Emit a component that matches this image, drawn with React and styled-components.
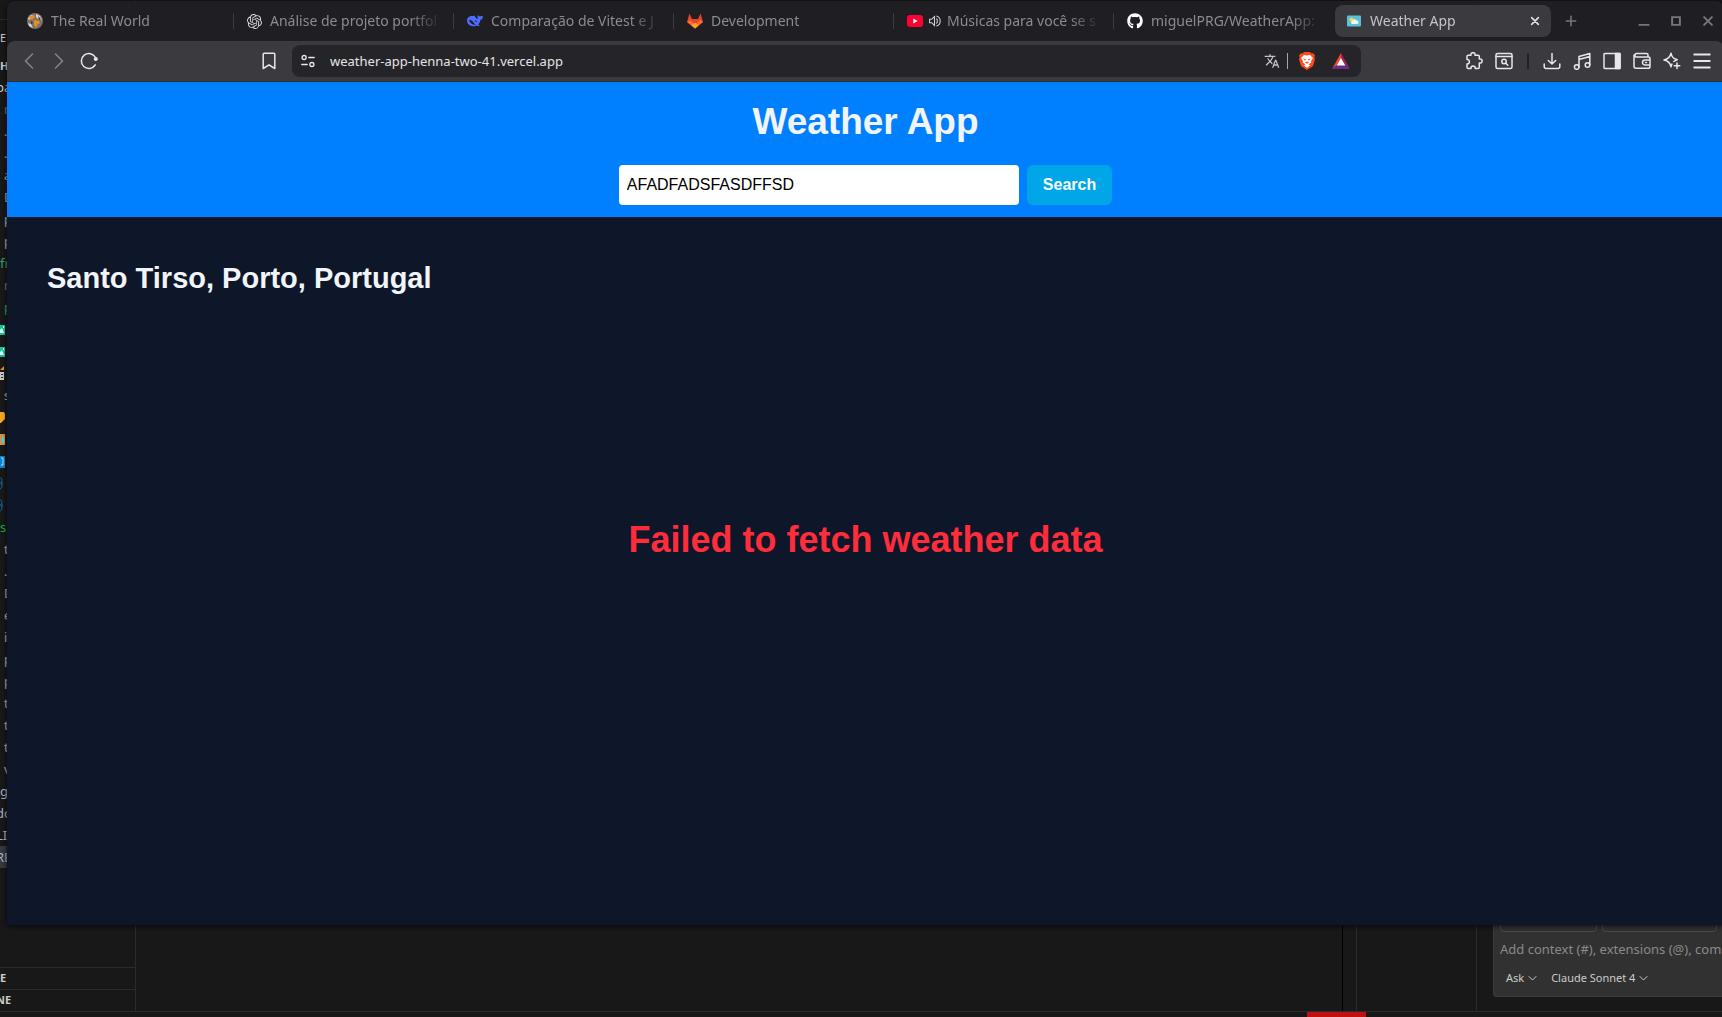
import React, { useState } from "react";
import styled, { createGlobalStyle } from "styled-components";
import { SiOpenai } from "react-icons/si";
import { FaGithub } from "react-icons/fa";
import { MdTranslate } from "react-icons/md";

const uiFont = `"Noto Sans", "Open Sans", sans-serif`;
const pageFont = `"Liberation Sans", Arial, sans-serif`;

const GlobalStyle = createGlobalStyle`
  *, *::before, *::after { box-sizing: border-box; }
  body { margin: 0; background: #181818; overflow: hidden; }
  button, input { font: inherit; }
  button { border: 0; padding: 0; background: none; color: inherit; cursor: pointer; }
  svg { display: block; flex: none; }
  h1, h2, p { margin: 0; }
`;

const Desktop = styled.div`
  position: relative;
  height: 100vh;
  overflow: hidden;
  background: #181818;
  color: #cccccc;
  font-family: ${uiFont};
`;

/* ---------- editor behind the browser ---------- */

const Editor = styled.div`
  display: flex;
  flex-direction: column;
  height: 100%;
`;

const Workbench = styled.div`
  display: flex;
  flex: 1;
  min-height: 0;
`;

const Sidebar = styled.aside`
  display: flex;
  flex-direction: column;
  width: 136px;
  border-right: 1px solid #2b2b2b;
  overflow: hidden;
`;

const SidebarTop = styled.div`
  height: 20px;
  flex: none;
  border-bottom: 1px solid #2b2b2b;
`;

const SidebarTitle = styled.div`
  height: ${(p) => p.$height}px;
  flex: none;
  display: flex;
  align-items: center;
  font-size: 11px;
  font-weight: ${(p) => (p.$bold ? 700 : 400)};
`;

const FileRow = styled.div`
  display: flex;
  align-items: center;
  flex: none;
  height: 22px;
  padding-left: ${(p) => (p.$nested ? 4 : 0)}px;
  text-indent: ${(p) => (p.$clipped ? -4 : 0)}px;
  font-size: 13px;
  color: ${(p) => p.$color || "#a8b4c0"};
  background: ${(p) => (p.$active ? "#37373d" : "transparent")};
`;

const Spacer = styled.div`
  flex: 1;
`;

const Section = styled.div`
  display: flex;
  align-items: center;
  flex: none;
  height: 22px;
  padding-bottom: 2px;
  text-indent: ${(p) => (p.$clipped ? -4 : 0)}px;
  border-top: 1px solid #2b2b2b;
  font-size: 11px;
  font-weight: 700;
`;

const Gutter = styled.div`
  width: ${(p) => p.$width}px;
  border-left: ${(p) => (p.$dark ? "1px solid #000000" : "1px solid #2b2b2b")};
`;

const ChatPanel = styled.section`
  display: flex;
  align-items: flex-end;
  width: 246px;
  padding: 0 0 14px 16px;
  border-left: 1px solid #2b2b2b;
`;

const ChatBox = styled.div`
  flex: 1;
  min-width: 0;
  overflow: hidden;
  padding: 0 0 8px 6px;
  background: #313131;
  border: 1px solid #3c3c3c;
  border-right: 0;
  border-radius: 4px 0 0 4px;
`;

const Chips = styled.div`
  display: flex;
  gap: 5px;
`;

const Chip = styled.div`
  width: ${(p) => p.$width}px;
  height: 22px;
  border: 1px solid #4a4a4a;
  border-radius: 4px;
`;

const ChatInput = styled.input`
  display: block;
  width: 320px;
  height: 34px;
  padding: 0;
  border: 0;
  outline: 0;
  background: none;
  color: #cccccc;
  font-size: 13px;
  &::placeholder { color: #8a8a8a; opacity: 1; }
`;

const ChatActions = styled.div`
  display: flex;
  gap: 14px;
  height: 22px;
  padding-left: 6px;
`;

const ChatAction = styled.button`
  display: flex;
  align-items: center;
  gap: 4px;
  font-size: 11px;
  white-space: nowrap;
`;

const StatusBar = styled.footer`
  flex: none;
  height: 6px;
  border-top: 1px solid #2b2b2b;
`;

const RemoteError = styled.div`
  width: 59px;
  height: 5px;
  margin-left: auto;
  margin-right: 356px;
  background: #c01010;
`;

/* ---------- browser window ---------- */

const Browser = styled.div`
  position: absolute;
  inset: 1px -2px 92px 7px;
  display: flex;
  flex-direction: column;
  background: #1f1e23;
  border-radius: 8px 8px 0 0;
  overflow: hidden;
  box-shadow: 0 1px 5px rgba(0, 0, 0, 0.8);
`;

const TabStrip = styled.div`
  display: flex;
  align-items: center;
  flex: none;
  height: 40px;
  padding-left: 8px;
`;

const Divider = styled.span`
  flex: none;
  width: 1px;
  height: 16px;
  margin: 0 1px 0 2px;
  background: ${(p) => (p.$hidden ? "transparent" : "#3c3b40")};
`;

const Tab = styled.div`
  display: flex;
  align-items: center;
  flex: 0 1 216px;
  min-width: 0;
  gap: 8px;
  height: 32px;
  padding: 0 9px 0 12px;
  border-radius: 8px;
  background: ${(p) => (p.$active ? "#3b3a3f" : "transparent")};
  color: ${(p) => (p.$active ? "#c4c4c6" : "#8c8b8e")};
  font-size: 14px;
`;

const TabTitle = styled.button`
  flex: 1;
  min-width: 0;
  overflow: hidden;
  white-space: nowrap;
  text-align: left;
  line-height: 24px;
  mask-image: linear-gradient(to right, #000 calc(100% - 32px), transparent);
`;

const Sound = styled.span`
  display: flex;
  margin: 0 -2px;
`;

const StripButton = styled.button`
  display: flex;
  align-items: center;
  justify-content: center;
  flex: none;
  width: 32px;
  height: 32px;
  color: #77767a;
`;

const CloseTab = styled.button`
  display: flex;
  align-items: center;
  justify-content: center;
  width: 14px;
  height: 16px;
  color: #e0e0e2;
`;

const Toolbar = styled.div`
  display: flex;
  align-items: center;
  flex: none;
  height: 41px;
  padding: 0 7px;
  background: #3b3a3f;
  border-bottom: 1px solid #2f2e33;
  border-radius: 8px 8px 0 0;
`;

const ToolButton = styled.button`
  display: flex;
  align-items: center;
  justify-content: center;
  flex: none;
  width: 30px;
  height: 30px;
  color: ${(p) => (p.$dim ? "#87868a" : "#e8e8ea")};
`;

const ToolDivider = styled.span`
  flex: none;
  width: 2px;
  height: 16px;
  margin: 0 8px;
  background: #222126;
`;

const LeadTools = styled.div`
  display: flex;
  flex: none;
  width: 270px;
  justify-content: space-between;
`;

const Group = styled.div`
  display: flex;
  align-items: center;
  gap: ${(p) => p.$gap || 0}px;
`;

const AddressBar = styled.div`
  display: flex;
  align-items: center;
  flex: 1;
  min-width: 0;
  height: 32px;
  margin: 0 98px 0 8px;
  padding: 0 5px 0 1px;
  border-radius: 8px;
  background: #252429;
`;

const UrlInput = styled.input`
  flex: 1;
  min-width: 0;
  height: 28px;
  margin-left: 7px;
  padding: 0;
  border: 0;
  outline: 0;
  background: none;
  color: #e4e4e6;
  font-size: 13px;
`;

const UrlDivider = styled.span`
  width: 1px;
  height: 16px;
  margin-right: 4px;
  background: #a8a8aa;
`;

/* ---------- weather page ---------- */

const Page = styled.div`
  display: flex;
  flex-direction: column;
  flex: 1;
  min-height: 0;
  background: #0d1729;
  color: #f1f5f9;
  font-family: ${pageFont};
`;

const PageHeader = styled.header`
  display: flex;
  flex-direction: column;
  align-items: center;
  gap: 16px;
  padding: 12px;
  background: #0080ff;
`;

const PageTitle = styled.h1`
  font-size: 37px;
  line-height: 55px;
`;

const SearchForm = styled.form`
  display: flex;
  gap: 8px;
`;

const SearchInput = styled.input`
  width: 400px;
  height: 40px;
  padding: 0 8px;
  border: 0;
  outline: 0;
  border-radius: 4px;
  background: #ffffff;
  color: #000000;
  font-size: 16px;
`;

const SearchButton = styled.button`
  height: 40px;
  padding: 0 16px;
  border-radius: 6px;
  background: #00a6e8;
  color: #f8fafc;
  font-size: 16px;
  font-weight: 700;
`;

const Content = styled.main`
  display: flex;
  flex-direction: column;
  flex: 1;
  padding: 40px;
`;

const Location = styled.h2`
  font-size: 29px;
  line-height: 42px;
`;

const ErrorMessage = styled.p`
  padding-top: 214px;
  color: #ff2c3c;
  font-size: 36px;
  font-weight: 700;
  line-height: 54px;
  text-align: center;
`;

/* ---------- icons ---------- */

const Line = ({ size = 18, width = 1.5, children, ...rest }) => (
  <svg width={size} height={size} viewBox="0 0 18 18" fill="none" stroke="currentColor"
    strokeWidth={width} strokeLinecap="round" strokeLinejoin="round" aria-hidden="true" {...rest}>
    {children}
  </svg>
);

const GlobeIcon = () => (
  <svg width="16" height="16" viewBox="0 0 16 16" aria-hidden="true">
    <circle cx="8" cy="8" r="8" fill="#77736e" />
    <path d="M1 5 4 2l3 .5L5 5 2 7zM9 1l4 2 2 4-4-1-2-2zM1 10l3 1 2 4-4-2z" fill="#d9d5cd" />
    <path d="M3 3l4-1 1 2-3 3-3-2zM7 7l5 1 1 2-3 2-1 3-2-3z" fill="#f08a1d" />
    <path d="M11 3l3 3-2 1zM4 8l2 2-2 1z" fill="#36332f" />
  </svg>
);

const WhaleIcon = () => (
  <svg width="16" height="14" viewBox="0 0 16 14" aria-hidden="true">
    <path d="M0 6.5C0 3.2 2.6 1.6 5.4 2c1 .1 1.7-.6 2.6-.1-.5.8 1.4 2.5 2.7 3 .1-1.5-.4-2.4.1-3.8.7 1.3 2 1.5 3.1 1.2.8-.2 1.4-.9 2.1-.6-.1 2.3-.9 4-2.7 4.4-.1 2-1 3.5-2 4.4l1.4 1.2c-1.2.6-2.2.3-3-.3C4.6 13.8 0 10.6 0 6.5z" fill="#4d6bfe" />
    <path d="M2 6c2-.6 4.2 1.6 5.3 3.4.5.8 1 1.1 1.6 1.1-2 1-6-1-6.9-4.5zM8 6.400c1-.2 1.900.7 1.900 1.700-.8 0-1.500-.8-1.900-1.700z" fill="#1f1e23" />
  </svg>
);

const GitlabIcon = () => (
  <svg width="16" height="16" viewBox="0 0 16 16" aria-hidden="true">
    <path d="M2.500.5 5 6h6L13.500.5 16 9l-8 6.500L0 9z" fill="#e8432e" />
    <path d="M0 9l3-2 5 4.500L13 7l3 2-8 6.600z" fill="#fc6d26" />
    <path d="M4.500 12.200 8 9.500l3.500 2.700L8 15.600z" fill="#fca326" />
  </svg>
);

const YoutubeIcon = () => (
  <svg width="16" height="12" viewBox="0 0 16 12" aria-hidden="true">
    <rect width="16" height="12" rx="3" fill="#ff0033" />
    <path d="M6.300 3.500v5L10.700 6z" fill="#fff" />
  </svg>
);

const SpeakerIcon = () => (
  <svg width="12" height="12" viewBox="0 0 12 12" fill="none" stroke="#cfcfd1" strokeWidth="1.100" aria-hidden="true">
    <path d="M.6 4.300h2L5.500 1.500v9L2.600 7.700h-2z" />
    <path d="M7.300 3.500c1.500 1 1.500 4 0 5M7.300 1c5.200 1.200 5.200 8.800 0 10" />
  </svg>
);

const WeatherIcon = () => (
  <svg width="15" height="12" viewBox="0 0 15 12" aria-hidden="true">
    <rect y="0.500" width="14" height="11" rx="1" fill="#5cc0da" />
    <circle cx="4.500" cy="4.500" r="2" fill="#f9d54a" />
    <path d="M5 9a1.700 1.700 0 0 1 .4-3.200 2.200 2.200 0 0 1 4.200-.2A1.800 1.800 0 0 1 10.500 9z" fill="#eef8fb" />
  </svg>
);

const BraveIcon = () => (
  <svg width="16" height="18" viewBox="0 0 16 18" aria-hidden="true">
    <path d="M5 0h6l1.500 1.500 1.700-.2L16 3.500l-.6 1.700.6 2-2 6.800L8 18l-6-4L0 7.200l.6-2L0 3.500l1.800-2.200 1.700.2z" fill="#ff4a1c" />
    <path d="M5 3l3 .5L11 3l3 3-2 3 .3 1.500-2.600 1.700L11 13.500 8 15.700 5 13.500l1.300-1.300-2.600-1.700L4 9 2 6z" fill="#fff" />
    <path d="M4 6.500l3 .8-.6 1.500zM12 6.500l-3 .8.6 1.500zM6 10.500l2-1 2 1-2 1.200z" fill="#ff4a1c" />
  </svg>
);

const BatIcon = () => (
  <svg width="18" height="16" viewBox="0 0 18 16" aria-hidden="true">
    <path d="M9 0v5.500L5 12l-5 4z" fill="#ff4724" />
    <path d="M9 0l9 16-5-4-4-6.500z" fill="#9e1f63" />
    <path d="M0 16l5-4h8l5 4z" fill="#662d91" />
    <path d="M9 5l4.300 7.500H4.700z" fill="#fff" />
  </svg>
);

const ChevronDown = () => (
  <Line size={9} width={2}><path d="M2 7l7 7 7-7" /></Line>
);

const FileIcon = ({ kind }) => (
  <svg width="5" height="14" viewBox="0 0 5 14" aria-hidden="true">
    {kind === "image" && <><path d="M0 3h5v10H0z" fill="#0ac79b" /><path d="M0 11V8l2-2 2 5zM3 4h1v2H3z" fill="#e6fff8" /></>}
    {kind === "lint" && <><path d="M0 4l4-4v4z" fill="#e8922a" /><path d="M0 6h4v8H0z" fill="#c8c8c8" /><path d="M1 8h2v1H1zM1 11h2v1H1z" fill="#222" /></>}
    {kind === "folder" && <path d="M0 2h4l1 2v5l-4 4H0z" fill="#f5a623" />}
    {kind === "box" && <><path d="M0 2h5v11H0z" fill="#c9954f" /><path d="M2 5h2v6H2z" fill="#5ed0d5" /></>}
    {kind === "json" && <><path d="M0 2h5v12H0z" fill="#0b85d1" /><path d="M1 4h2v7H1" fill="none" stroke="#b8e5ff" /></>}
    {kind === "react" && <path d="M0 2c3 0 2 5 0 5M0 7c2 0 3 5 0 6M1 6a1.500 1.500 0 1 1 0 3" fill="none" stroke="#1467a8" />}
  </svg>
);

const files = [
  { t: "pa", root: true, clipped: true, color: "#cccccc" },
  { t: "n", color: "#6f7780" }, { t: "." }, { t: "." }, { t: "a" }, { t: "D" }, { t: "p" }, { t: "p" },
  { t: "fr", root: true, color: "#3f9e68" },
  { t: "n", color: "#6f7780" }, { t: "p", color: "#3f9e68" },
  { icon: "image" }, { icon: "image" }, { icon: "lint" }, { t: "s" },
  { icon: "folder" }, { icon: "box" }, { icon: "json" }, { icon: "react" }, { icon: "react" },
  { t: "s", root: true, color: "#12b04c" },
  { t: "t" }, { t: "." }, { t: "D" }, { t: "e" }, { t: "i" }, { t: "p" }, { t: "p" },
  { t: "t" }, { t: "t" }, { t: "t" }, { t: "v" },
  { t: "g", root: true }, { t: "do", root: true, clipped: true }, { t: "LI", root: true, clipped: true },
  { t: "RE", root: true, clipped: true, active: true },
];

const tabs = [
  { title: "The Real World", icon: <GlobeIcon /> },
  { title: "Análise de projeto portfol", icon: <SiOpenai size={15} color="#d8d8da" /> },
  { title: "Comparação de Vitest e J", icon: <WhaleIcon /> },
  { title: "Development", icon: <GitlabIcon /> },
  { title: "Músicas para você se s", icon: <YoutubeIcon />, sound: true },
  { title: "miguelPRG/WeatherApp:", icon: <FaGithub size={16} color="#ffffff" /> },
  { title: "Weather App", icon: <WeatherIcon />, active: true },
];

export default function App() {
  const [city, setCity] = useState("AFADFADSFASDFFSD");
  const [url, setUrl] = useState("weather-app-henna-two-41.vercel.app");

  return (
    <Desktop>
      <GlobalStyle />
      <Editor>
        <Workbench>
          <Sidebar>
            <SidebarTop />
            <SidebarTitle $height={34}>E</SidebarTitle>
            <SidebarTitle $height={22} $bold>H</SidebarTitle>
            {files.map((f, i) => (
              <FileRow key={i} $nested={!f.root && !f.icon} $clipped={f.clipped} $color={f.color} $active={f.active}>
                {f.icon ? <FileIcon kind={f.icon} /> : f.t}
              </FileRow>
            ))}
            <Spacer />
            <Section>E</Section>
            <Section $clipped>NE</Section>
          </Sidebar>
          <Spacer />
          <Gutter $width={14} $dark />
          <Gutter $width={120} />
          <ChatPanel>
            <ChatBox>
              <Chips><Chip $width={97} /><Chip $width={115} /></Chips>
              <ChatInput aria-label="Chat message" placeholder="Add context (#), extensions (@), commands" />
              <ChatActions>
                <ChatAction type="button">Ask <ChevronDown /></ChatAction>
                <ChatAction type="button">Claude Sonnet 4 <ChevronDown /></ChatAction>
              </ChatActions>
            </ChatBox>
          </ChatPanel>
        </Workbench>
        <StatusBar><RemoteError /></StatusBar>
      </Editor>

      <Browser>
        <TabStrip>
          {tabs.map((tab, i) => (
            <React.Fragment key={tab.title}>
              <Tab $active={tab.active}>
                {tab.icon}
                {tab.sound && <Sound><SpeakerIcon /></Sound>}
                <TabTitle type="button">{tab.title}</TabTitle>
                {tab.active && (
                  <CloseTab type="button" aria-label="Close tab">
                    <Line size={10} width={3}><path d="M3 3l12 12M15 3 3 15" /></Line>
                  </CloseTab>
                )}
              </Tab>
              <Divider $hidden={i >= 5} />
            </React.Fragment>
          ))}
          <StripButton type="button" aria-label="New tab">
            <Line size={14} width={2}><path d="M9 3v12M3 9h12" /></Line>
          </StripButton>
          <Spacer />
          <StripButton type="button" aria-label="Minimize">
            <Line size={14} width={2.5}><path d="M3 14h12" /></Line>
          </StripButton>
          <StripButton type="button" aria-label="Maximize">
            <Line size={14} width={2.5} strokeLinejoin="miter"><path d="M4 4h10v10H4z" /></Line>
          </StripButton>
          <StripButton type="button" aria-label="Close window">
            <Line size={14} width={2.5}><path d="M4 4l10 10M14 4 4 14" /></Line>
          </StripButton>
        </TabStrip>

        <Toolbar>
          <LeadTools>
            <Group>
              <ToolButton type="button" $dim aria-label="Back"><Line><path d="M12.500 2 5.500 9l7 7" /></Line></ToolButton>
              <ToolButton type="button" $dim aria-label="Forward"><Line><path d="M5.500 2l7 7-7 7" /></Line></ToolButton>
              <ToolButton type="button" aria-label="Reload">
                <Line><path d="M15.200 13A7.500 7.500 0 1 1 15.500 5.500" /><circle cx="15.800" cy="7" r="1.300" fill="currentColor" /></Line>
              </ToolButton>
            </Group>
            <ToolButton type="button" aria-label="Bookmark">
              <Line><path d="M4.200 1.200h9.600a1 1 0 0 1 1 1v14.300L9 12.800l-5.800 3.700V2.200a1 1 0 0 1 1-1z" /></Line>
            </ToolButton>
          </LeadTools>

          <AddressBar>
            <ToolButton type="button" aria-label="Site information">
              <Line size={14} width={1.700}>
                <circle cx="4" cy="4.500" r="2.600" /><path d="M10 4.500h7M1 13.500h7" /><circle cx="14" cy="13.500" r="2.600" />
              </Line>
            </ToolButton>
            <UrlInput aria-label="Address" value={url} onChange={(e) => setUrl(e.target.value)} />
            <ToolButton type="button" aria-label="Translate"><MdTranslate size={16} color="#c4c4c6" /></ToolButton>
            <UrlDivider />
            <Group $gap={4}>
              <ToolButton type="button" aria-label="Shields"><BraveIcon /></ToolButton>
              <ToolButton type="button" aria-label="Rewards"><BatIcon /></ToolButton>
            </Group>
          </AddressBar>

          <ToolButton type="button" aria-label="Extensions">
            <Line><path d="M2 4.500c0-.8.500-1.300 1.300-1.300H6C5.600 1.500 6.800.7 8 .7s2.400.8 2 2.500h3c.8 0 1.300.5 1.300 1.300V7c1.700-.4 2.900.6 2.900 2s-1.200 2.400-2.900 2v4.200c0 .8-.5 1.300-1.300 1.300h-2.800c.2-1.700-.8-2.500-2.100-2.500s-2.300.8-2.100 2.500H3.300c-.8 0-1.300-.5-1.300-1.300V12c1.600 0 2.400-.8 2.400-2.300S3.600 7.500 2 7.500z" /></Line>
          </ToolButton>
          <ToolButton type="button" aria-label="Find in page">
            <Line><rect x="1" y="1.500" width="16" height="15" rx="1.500" /><path d="M1 4.500h16" /><circle cx="9" cy="9.500" r="2.200" /><path d="M10.800 11.300l2 2" /></Line>
          </ToolButton>
          <ToolDivider />
          <ToolButton type="button" aria-label="Downloads">
            <Line><path d="M9 1.500V12M5.300 8.500 9 12l3.700-3.500M1.200 12v2.500c0 1.200.8 2 2 2h11.600c1.200 0 2-.8 2-2V12" /></Line>
          </ToolButton>
          <ToolButton type="button" aria-label="Playlist">
            <Line><circle cx="3.700" cy="15" r="2.300" /><circle cx="14.500" cy="13" r="2.300" /><path d="M6 15V4.500L16.800 1.500V13M6 7.500l10.800-3" /></Line>
          </ToolButton>
          <ToolButton type="button" aria-label="Sidebar">
            <Line><rect x="1" y="1.500" width="16" height="15" rx="0.800" /><path d="M12.500 1.500H17v15h-4.500z" fill="currentColor" /></Line>
          </ToolButton>
          <ToolButton type="button" aria-label="Wallet">
            <Line><path d="M15 5V3c0-.8-.5-1.500-1.500-1.500H3A2 2 0 0 0 3 5h12.500c.8 0 1.500.7 1.500 1.500v8c0 1-.8 1.800-1.800 1.800H3c-1.200 0-2-.8-2-2V3M17 8h-5a2.500 2.500 0 0 0 0 5h5M12.500 10.500h1" /></Line>
          </ToolButton>
          <ToolButton type="button" aria-label="Assistant">
            <Line><path d="M8 1.200c.7 4 2 5.600 6.300 6.500-1.300.5-2.500 1-3.500 1.800M8 1.200C7.300 5.200 5.500 7 1 8c4.500 1 6.300 2.800 7 6.800.2-1 .5-2 .9-2.700" /><path d="M14 11v5.500M11.200 13.800h5.600" /></Line>
          </ToolButton>
          <ToolButton type="button" aria-label="Menu">
            <Line width={1.800}><path d="M1.200 2.500h15.600M1.200 9h15.600M1.200 15.500h15.600" /></Line>
          </ToolButton>
        </Toolbar>

        <Page>
          <PageHeader>
            <PageTitle>Weather App</PageTitle>
            <SearchForm onSubmit={(e) => e.preventDefault()}>
              <SearchInput aria-label="City" value={city} onChange={(e) => setCity(e.target.value)} />
              <SearchButton type="submit">Search</SearchButton>
            </SearchForm>
          </PageHeader>
          <Content>
            <Location>Santo Tirso, Porto, Portugal</Location>
            <ErrorMessage role="alert">Failed to fetch weather data</ErrorMessage>
          </Content>
        </Page>
      </Browser>
    </Desktop>
  );
}
